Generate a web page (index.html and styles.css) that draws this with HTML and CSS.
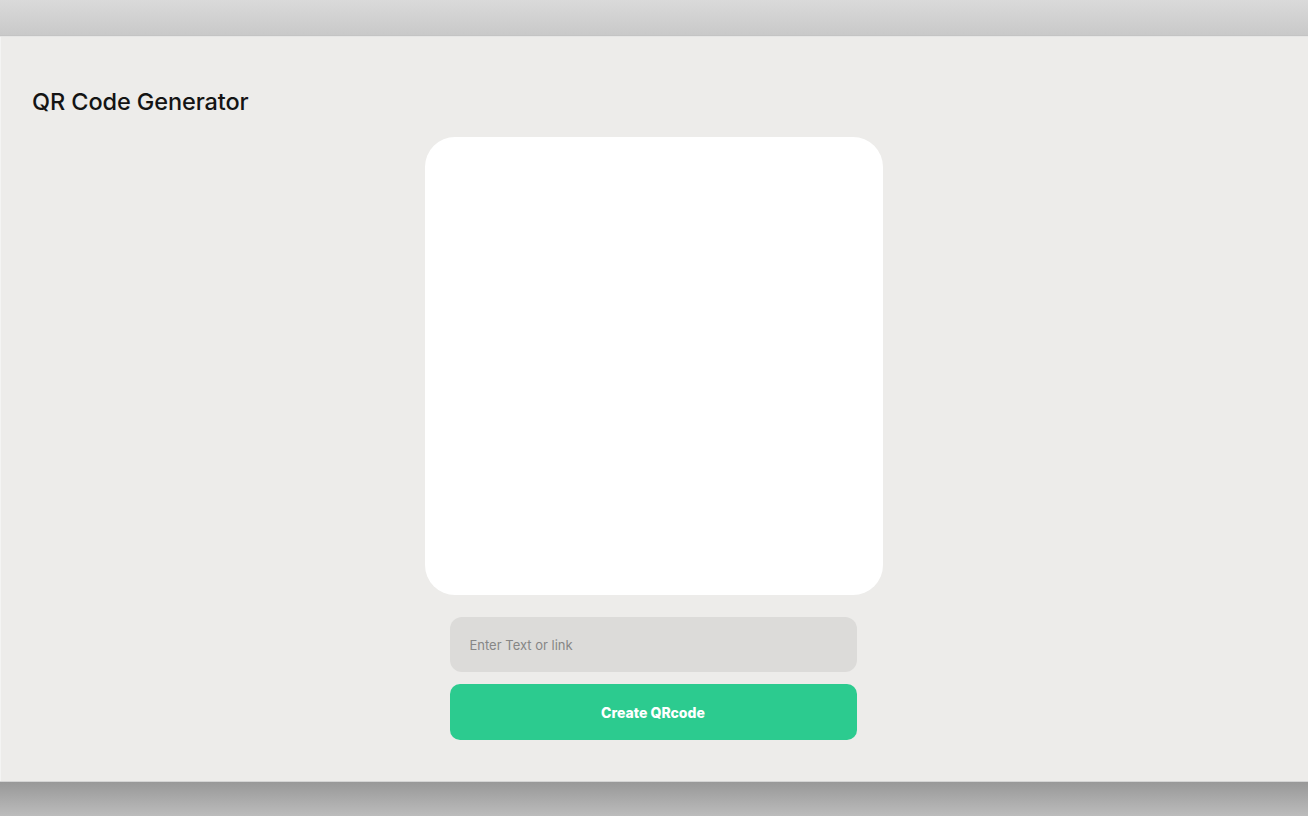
FILE: index.html
```html
<!DOCTYPE html>
<html lang="en">
<head>
<meta charset="utf-8">
<title>QR Code Generator</title>
<link rel="stylesheet" href="styles.css">
</head>
<body>
<div class="topbar"></div>
<main class="window">
  <h1 class="title">QR Code Generator</h1>
  <div class="center">
    <div class="qr-card"></div>
    <div class="form">
      <input class="field" type="text" placeholder="Enter Text or link">
      <button class="btn" type="button">Create QRcode</button>
    </div>
  </div>
</main>
<div class="bottombar"></div>
</body>
</html>
```
FILE: styles.css
```css
* { box-sizing: border-box; }
html, body { margin: 0; padding: 0; }
body {
  width: 1308px;
  height: 816px;
  overflow: hidden;
  background: #c9c9c9;
  font-family: Inter, "Noto Sans", sans-serif;
}
.topbar {
  height: 36px;
  background: linear-gradient(#dadada, #c9c9c9);
  border-bottom: 1px solid #c4c4c4;
}
.window {
  height: 745px;
  background: #edecea;
  box-shadow: inset 1px 0 0 #f4f4f3;
  border-top: 1px solid #e6e6e5;
  padding: 49px 0 0 32px;
}
.title {
  margin: 0;
  font-size: 23.5px;
  font-weight: 500;
  color: #141414;
  line-height: 32px;
  letter-spacing: -0.1px;
}
.center {
  margin-left: -34px;
  margin-top: 19px;
  display: flex;
  flex-direction: column;
  align-items: center;
}
.qr-card {
  width: 458px;
  height: 458px;
  background: #ffffff;
  border-radius: 30px;
  margin-left: 1px;
}
.form {
  width: 407px;
  margin-top: 22px;
  display: flex;
  flex-direction: column;
  gap: 12px;
}
.field {
  height: 55px;
  border: none;
  outline: none;
  border-radius: 12px;
  background: #dcdbd9;
  padding: 0 20px;
  font-family: Inter, "Noto Sans", sans-serif;
  font-size: 13px;
  color: #333;
}
.field::placeholder { color: #868686; }
.btn {
  height: 56px;
  border: none;
  border-radius: 10px;
  background: #2ccb8f;
  color: #ffffff;
  font-family: Inter, "Noto Sans", sans-serif;
  font-size: 14px;
  font-weight: 800;
}
.bottombar {
  height: 35px;
  background: linear-gradient(#989898, #bcbcbc);
  border-top: 1px solid #d4d4d4;
}
```
